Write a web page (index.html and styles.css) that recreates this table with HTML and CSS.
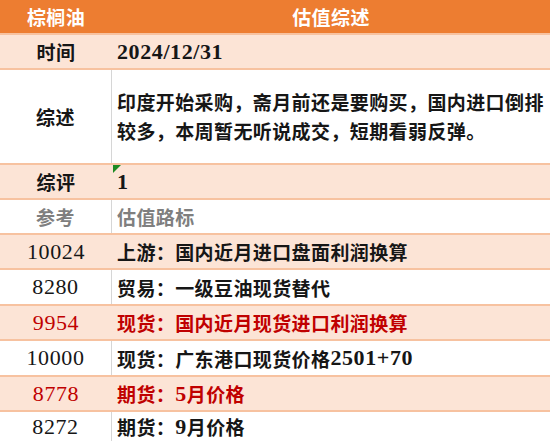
FILE: index.html
```html
<!DOCTYPE html>
<html lang="zh">
<head>
<meta charset="utf-8">
<link rel="stylesheet" href="styles.css">
</head>
<body>
<div class="sheet">
  <div class="row head">
    <div class="c1">棕榈油</div>
    <div class="c2 center">估值综述</div>
  </div>
  <div class="row peach h35">
    <div class="c1 lbl">时间</div>
    <div class="c2"><span class="num b">2024/12/31</span></div>
  </div>
  <div class="row white h95">
    <div class="c1 lbl">综述</div>
    <div class="c2 para">印度开始采购，斋月前还是要购买，国内进口倒排<br>较多，本周暂无听说成交，短期看弱反弹。</div>
  </div>
  <div class="row peach h35">
    <div class="c1 lbl">综评</div>
    <div class="c2 flag"><span class="num b">1</span></div>
  </div>
  <div class="row white h35 gray">
    <div class="c1 lbl">参考</div>
    <div class="c2">估值路标</div>
  </div>
  <div class="row peach h35">
    <div class="c1"><span class="num">10024</span></div>
    <div class="c2">上游：国内近月进口盘面利润换算</div>
  </div>
  <div class="row white h36">
    <div class="c1"><span class="num">8280</span></div>
    <div class="c2">贸易：一级豆油现货替代</div>
  </div>
  <div class="row peach h35 red">
    <div class="c1"><span class="num">9954</span></div>
    <div class="c2">现货：国内近月现货进口利润换算</div>
  </div>
  <div class="row white h36">
    <div class="c1"><span class="num">10000</span></div>
    <div class="c2">现货：广东港口现货价格<span class="num b">2501+70</span></div>
  </div>
  <div class="row peach h35 red">
    <div class="c1"><span class="num">8778</span></div>
    <div class="c2">期货：<span class="num b">5</span>月价格</div>
  </div>
  <div class="row white last">
    <div class="c1"><span class="num">8272</span></div>
    <div class="c2">期货：<span class="num b">9</span>月价格</div>
  </div>
</div>
</body>
</html>
```

FILE: styles.css
```css
html, body {
  margin: 0;
  padding: 0;
  background: #ffffff;
}
body {
  width: 550px;
  height: 441px;
  overflow: hidden;
  font-family: "Liberation Serif", "Noto Sans CJK SC", serif;
  font-size: 19px;
  font-weight: 700;
  color: #161616;
}
.sheet {
  display: flex;
  flex-direction: column;
  width: 550px;
  height: 441px;
}
.row {
  display: grid;
  grid-template-columns: 112px 438px;
  box-sizing: border-box;
  border-top: 2px solid #f7c2a0;
}
.head {
  height: 33px;
  border-top: none;
  background: #ed7d31;
  color: #ffffff;
}
.h35 { height: 35px; }
.h36 { height: 36px; }
.h95 { height: 95px; }
.last { flex: 1; }
.peach { background: #fce4d6; }
.white { background: #ffffff; }
.white .c1 { border-right: 1px solid #d6d6d6; }
.c1 {
  display: flex;
  align-items: center;
  justify-content: center;
  letter-spacing: 0.4px;
  white-space: nowrap;
}
.c2 {
  display: flex;
  align-items: center;
  padding-left: 5px;
  letter-spacing: 0.4px;
  white-space: nowrap;
  position: relative;
}
.c2.center {
  justify-content: center;
  padding-left: 0;
}
.para {
  display: block;
  align-self: center;
  line-height: 29px;
  padding-top: 2px;
}
.num {
  font-family: "Liberation Serif", serif;
  font-size: 22px;
  font-weight: 400;
  letter-spacing: 0.6px;
}
.num.b { font-weight: 700; }
.gray { color: #7f7f7f; }
.red { color: #c00000; }
.flag::before {
  content: "";
  position: absolute;
  left: 1px;
  top: 0;
  width: 0;
  height: 0;
  border-top: 8px solid #1e8a24;
  border-right: 8px solid transparent;
}
```
